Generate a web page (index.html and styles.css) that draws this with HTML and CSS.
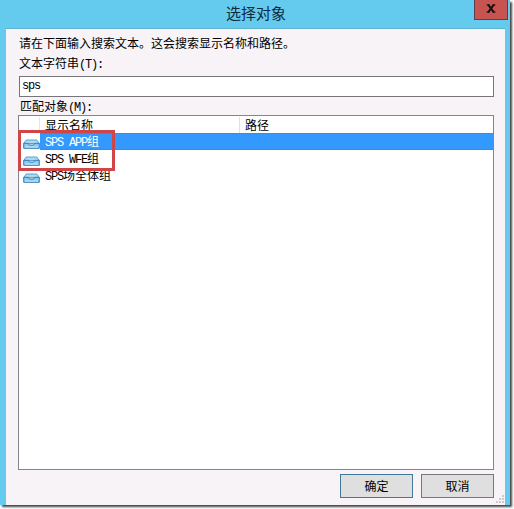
FILE: index.html
```
<!DOCTYPE html>
<html lang="zh-CN">
<head>
  <meta charset="UTF-8">
  <title>选择对象</title>
  <link rel="stylesheet" href="styles.css">
</head>
<body>
  <svg width="0" height="0" class="defs">
    <symbol id="group" viewBox="0 0 17 10">
      <path d="M3.2 1h10.6l2.5 3.5H.7z" fill="#a9dcf2" stroke="#5e9fd0"/>
      <path d="M.7 4.3h4.5l1.3 1.8h4l1.3-1.8h4.5v5H.7z" fill="#8fc8eb" stroke="#347fb9"/>
      <path d="M2 8h13" stroke="#c7ecfa"/>
    </symbol>
  </svg>

  <div class="window">
    <div class="titlebar">
      <h1>选择对象</h1>
      <button class="close" aria-label="关闭">
        <svg width="10" height="9" viewBox="0 0 10 9">
          <path d="M.5 1h3M6.5 1h3M.5 8h3M6.5 8h3" stroke="#111"/>
          <path d="M2 .5l6 8M8 .5l-6 8" stroke="#111" stroke-width="2"/>
        </svg>
      </button>
    </div>

    <div class="content">
      <p class="hint">请在下面输入搜索文本。这会搜索显示名称和路径。</p>
      <label class="search-label" for="search">文本字符串<span class="en">(T):</span></label>
      <input type="text" id="search" class="en" value="sps">
      <div class="list-label">匹配对象<span class="en">(M):</span></div>

      <div class="list">
        <div class="list-head">
          <span class="col-icon"></span>
          <span class="col-name">显示名称</span>
          <span class="col-path">路径</span>
        </div>
        <div class="row selected">
          <svg class="icon"><use href="#group"/></svg>
          <div class="cell"><span class="en">SPS APP</span>组</div>
        </div>
        <div class="row">
          <svg class="icon"><use href="#group"/></svg>
          <div class="cell"><span class="en">SPS WFE</span>组</div>
        </div>
        <div class="row">
          <svg class="icon"><use href="#group"/></svg>
          <div class="cell"><span class="en">SPS</span>场全体组</div>
        </div>
        <div class="mark"></div>
      </div>

      <div class="buttons">
        <button class="btn default">确定</button>
        <button class="btn">取消</button>
      </div>

      <svg class="grip" width="9" height="9" viewBox="0 0 9 9" fill="#cbc9cd">
        <path d="M6 0h2v2H6zM3 3h2v2H3zM6 3h2v2H6zM0 6h2v2H0zM3 6h2v2H3zM6 6h2v2H6z"/>
      </svg>
    </div>
  </div>
</body>
</html>
```
FILE: styles.css
```
* {
  box-sizing: border-box;
}

body {
  margin: 0;
  height: 509px;
  overflow: hidden;
  background: #fff;
  color: #000;
  font: 12px/16px "Noto Sans CJK SC", sans-serif;
}

.defs {
  position: absolute;
}

.window {
  width: 510px;
  height: 505px;
  padding: 0 5px 0 6px;
  background: #64caee;
  box-shadow: 2px 2px 2px #444;
}

.titlebar {
  display: flex;
  justify-content: flex-end;
  height: 29px;
  border-bottom: 1px solid #62b0cd;
}

h1 {
  flex: 1;
  margin: 0;
  padding-left: 32px;
  text-align: center;
  font-size: 15px;
  font-weight: 400;
  line-height: 26px;
  color: #10293a;
}

.close {
  display: flex;
  align-items: center;
  justify-content: center;
  width: 34px;
  height: 20px;
  margin-right: -3px;
  padding: 0 0 2px;
  border: 1px solid #593e50;
  border-top: 0;
  background: #c75450;
}

.content {
  position: relative;
  height: 476px;
  padding: 6px 11px 0 12px;
  background: #f7f3f7;
}

/* half-width latin, 6px per character */
.en {
  font-family: "Liberation Mono", "Noto Sans CJK SC", monospace;
  font-size: 12px;
  letter-spacing: -1.2px;
  line-height: 12px;
}

.hint {
  height: 16px;
  margin: 0 0 0 1px;
}

.search-label {
  display: block;
  height: 16px;
  margin: 4px 0 5px 1px;
}

#search {
  display: block;
  width: 475px;
  height: 21px;
  margin-left: 1px;
  padding: 0 2px 1px;
  border: 1px solid #77747a;
  border-radius: 0;
  background: #fff;
  color: #000;
}

.list-label {
  height: 18px;
  padding: 1px 0 0 2px;
}

.list {
  position: relative;
  width: 476px;
  height: 355px;
  border: 1px solid #85848a;
  background: #fff;
}

.list-head {
  display: flex;
  height: 17px;
  padding-top: 1px;
}

.list-head span {
  height: 16px;
}

.col-icon {
  width: 21px;
  border-right: 1px solid #e5e5e5;
}

.col-name {
  width: 200px;
  padding-left: 5px;
  border-right: 1px solid #e0e0e0;
}

.col-path {
  padding-left: 5px;
}

.row {
  display: flex;
  height: 17px;
}

.icon {
  width: 17px;
  height: 10px;
  margin: 6px 0 0 4px;
}

.cell {
  flex: 1;
  padding-left: 5px;
}

.selected .cell {
  background: #3399fe;
  box-shadow: inset 0 1px #438bc8, inset 0 -1px #438bc8;
  color: #fff;
}

.mark {
  position: absolute;
  left: -1px;
  top: 14px;
  width: 97px;
  height: 41px;
  border: 3px solid #d04548;
}

.buttons {
  display: flex;
  justify-content: flex-end;
  gap: 8px;
  margin-top: 4px;
}

.btn {
  width: 73px;
  height: 24px;
  padding: 0;
  border: 1px solid #77767a;
  border-radius: 0;
  background: #dfdfdf;
  color: #000;
  font: inherit;
}

.default {
  border-color: #41799c;
}

.grip {
  position: absolute;
  right: 0;
  bottom: 1px;
}
```
